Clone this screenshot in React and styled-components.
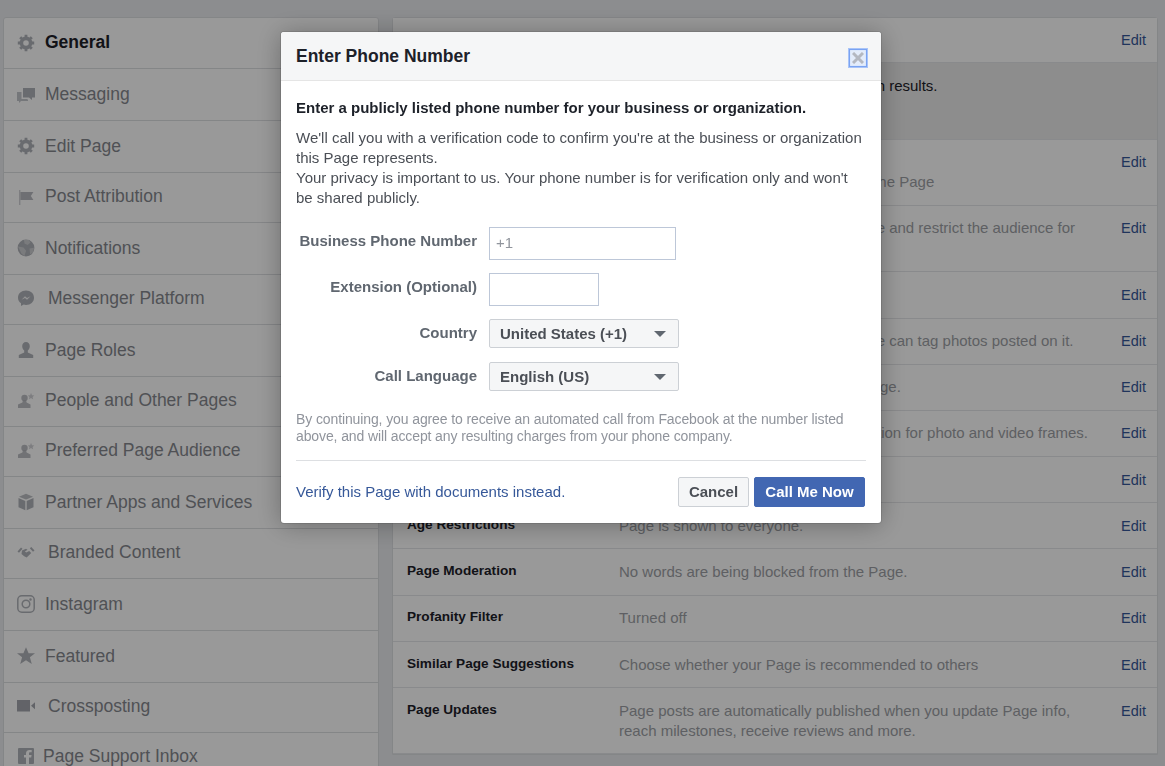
import React from 'react';
import styled, { createGlobalStyle } from 'styled-components';

const GlobalStyle = createGlobalStyle`
  html, body {
    margin: 0;
    padding: 0;
    height: 100%;
    overflow: hidden;
    background: #e9ebee;
    font-family: "Liberation Sans", Arial, sans-serif;
  }
`;

const Page = styled.div`
  display: flex;
  align-items: flex-start;
  gap: 14px;
  height: 766px;
  padding: 17px 6px 0 3px;
  box-sizing: border-box;
  overflow: hidden;
`;

const Sidebar = styled.nav`
  flex: 0 0 376px;
  background: #fff;
  border: 1px solid #dddfe2;
  border-radius: 3px 3px 0 0;
  box-sizing: border-box;
`;

const NavItem = styled.div`
  display: flex;
  align-items: center;
  height: ${p => p.$h}px;
  box-sizing: border-box;
  padding-left: 13px;
  padding-bottom: ${p => (p.$h === 50 ? 3 : 1)}px;
  border-bottom: 1px solid #dddfe2;
  font-size: 17.5px;
  color: ${p => (p.$active ? '#1d2129' : '#85888e')};
  font-weight: ${p => (p.$active ? 700 : 400)};
  white-space: nowrap;
`;

const NavIcon = styled.svg`
  flex: none;
  width: 18px;
  height: 18px;
  margin-right: ${p => p.$gap}px;
  color: #b0b3b9;
`;

const Main = styled.section`
  flex: 0 0 766px;
  margin-left: -1px;
  background: #fff;
  border: 1px solid #dddfe2;
  border-radius: 3px 3px 0 0;
  box-sizing: border-box;
`;

const Row = styled.div`
  display: flex;
  height: ${p => p.$h}px;
  box-sizing: border-box;
  padding: ${p => p.$pt}px 11px 0 14px;
  background: ${p => (p.$hl ? '#ebebeb' : '#fff')};
  border-bottom: 1px solid #e5e6e9;
`;

const RowLabel = styled.div`
  flex: 0 0 212px;
  margin-top: 1px;
  font-size: 13.6px;
  line-height: 16px;
  font-weight: 700;
  color: #1d2129;
`;

const RowValue = styled.div`
  flex: 0 0 480px;
  font-size: 15px;
  line-height: 20px;
  color: ${p => (p.$hl ? '#1d2129' : '#9d9fa5')};
  white-space: nowrap;
`;

const EditLink = styled.a`
  margin-left: auto;
  font-size: 14.5px;
  line-height: 20px;
  color: #365899;
`;

const Overlay = styled.div`
  position: fixed;
  inset: 0;
  background: rgba(0, 0, 0, 0.4);
`;

const Modal = styled.div`
  width: 600px;
  margin: 32px 0 0 281px;
  background: #fff;
  border-radius: 3px;
  box-shadow: 0 2px 26px rgba(0, 0, 0, 0.3), 0 0 0 1px rgba(0, 0, 0, 0.1);
`;

const ModalHeader = styled.header`
  display: flex;
  align-items: center;
  justify-content: space-between;
  height: 49px;
  box-sizing: border-box;
  padding: 0 14px 0 15px;
  background: #f5f6f7;
  border-bottom: 1px solid #e5e5e5;
  border-radius: 3px 3px 0 0;
`;

const ModalTitle = styled.h2`
  margin: 0;
  font-size: 17.5px;
  font-weight: 700;
  color: #1d2129;
`;

const CloseButton = styled.button`
  display: flex;
  align-items: center;
  justify-content: center;
  width: 18px;
  height: 18px;
  margin-top: 4px;
  padding: 0;
  background: #e3ecfb;
  border: 1px solid #7aa3f2;
  box-shadow: 0 0 0 1px #a9c4f8, inset 0 0 1px #9bbcf7;
  box-sizing: border-box;
  svg {
    display: block;
  }
`;

const ModalBody = styled.div`
  padding: 18px 15px 16px;
`;

const Lead = styled.p`
  margin: 0 0 11px;
  font-size: 15px;
  line-height: 18px;
  font-weight: 700;
  color: #1d2129;
`;

const Para = styled.p`
  margin: 0 0 19px;
  font-size: 15px;
  line-height: 20px;
  color: #4b4f56;
`;

const Form = styled.div`
  display: flex;
  flex-direction: column;
`;

const FormRow = styled.div`
  display: flex;
  align-items: center;
  gap: 12px;
  margin-bottom: ${p => p.$mb}px;
`;

const FormLabel = styled.label`
  flex: 0 0 181px;
  padding-bottom: ${p => p.$lift}px;
  text-align: right;
  font-size: 15px;
  font-weight: 700;
  color: #606770;
`;

const Input = styled.input`
  width: ${p => p.$w}px;
  height: 33px;
  padding: 0 6px 2px;
  box-sizing: border-box;
  border: 1px solid #bdc7d8;
  background: #fff;
  font: 15px "Liberation Sans", Arial, sans-serif;
  outline: none;
  &::placeholder {
    color: #90949c;
  }
`;

const Select = styled.div`
  display: flex;
  align-items: center;
  justify-content: space-between;
  width: 190px;
  height: 29px;
  padding: 0 12px 0 10px;
  box-sizing: border-box;
  border: 1px solid #ccd0d5;
  border-radius: 2px;
  background: #f5f6f7;
  font-size: 15px;
  font-weight: 700;
  color: #4b4f56;
`;

const Caret = styled.span`
  width: 0;
  height: 0;
  border-style: solid;
  border-width: 6px 6px 0;
  border-color: #606770 transparent transparent;
`;

const Notice = styled.p`
  margin: 20px 0 15px;
  font-size: 14px;
  letter-spacing: -0.11px;
  line-height: 17px;
  color: #90949c;
`;

const Footer = styled.footer`
  display: flex;
  align-items: center;
  gap: 5px;
  padding: 16px 1px 0 0;
  border-top: 1px solid #dddfe2;
`;

const FooterLink = styled.a`
  margin-right: auto;
  padding-bottom: 2px;
  font-size: 15px;
  color: #365899;
`;

const Button = styled.button`
  width: ${p => p.$w}px;
  height: 30px;
  padding: 0 0 2px;
  box-sizing: border-box;
  border: 1px solid ${p => (p.$primary ? '#4267b2' : '#ccd0d5')};
  border-radius: 2px;
  background: ${p => (p.$primary ? '#4267b2' : '#f5f6f7')};
  color: ${p => (p.$primary ? '#fff' : '#4b4f56')};
  font: 700 15px "Liberation Sans", Arial, sans-serif;
`;

const Gear = (
  <g fill="none" stroke="currentColor">
    <circle cx="9" cy="9" r="4.6" strokeWidth="3.600" />
    <path strokeWidth="2.800" d="M9 .8v3M9 14.200v3M.8 9h3M14.200 9h3M3.200 3.200l2.100 2.100M12.700 12.700l2.100 2.100M14.800 3.200l-2.100 2.100M5.300 12.700l-2.100 2.100" />
  </g>
);

const PersonStar = (
  <g fill="currentColor">
    <circle cx="7.500" cy="7" r="3.200" opacity=".85" />
    <path opacity=".85" d="M6 9h3l.6 2.600 3.900 2V17H1v-3.400l4.400-2z" />
    <path opacity=".6" d="M14 2l1 2.200 2.300.2-1.700 1.600.5 2.300-2.100-1.200-2 1.200.5-2.300-1.700-1.600 2.300-.2z" />
  </g>
);

const icons = {
  gear: Gear,
  chat: (
    <g fill="currentColor">
      <path d="M6 3h12v9.500h-3V15l-3-2.500H6z" />
      <path opacity=".75" d="M0 7h4.500v7H10l1 .8V16H4l-2 2v-2H0z" />
    </g>
  ),
  flag: (
    <g fill="currentColor">
      <path opacity=".6" d="M2 3h1.400v15H2z" />
      <path d="M3.400 5h13l-2.600 4 2.600 4h-13z" opacity=".9" />
    </g>
  ),
  globe: (
    <g>
      <circle cx="9" cy="9" r="8.400" fill="currentColor" />
      <path d="M7 .9L11.500 .8l2 2.800-2.900 2.400-3.100-1.600zM1 7.500l5.500 1 2.600 3.200-1.700 5.300-3-2.500zM12.500 9.500l4.500-.7-.9 4.500-3 2.200z" fill="#ffffff" opacity=".35" />
    </g>
  ),
  messenger: (
    <g>
      <path fill="currentColor" d="M9 1.500c4.600 0 8 3 8 7.200s-3.400 7.200-8 7.200c-.8 0-1.600-.1-2.300-.3L4 17v-2.700C2.200 13 1 11 1 8.700 1 4.500 4.400 1.500 9 1.500z" />
      <path d="M4.500 10.800L8 7.200l2 1.800 3.500-1.800-3.500 3.600-2-1.800z" fill="#ffffff" opacity=".9" />
    </g>
  ),
  person: (
    <path fill="currentColor" d="M9 1c2.300 0 3.800 1.800 3.800 4.200 0 1.900-.9 3.500-2 4.300v1.900l5.400 2.700V17H1.800v-2.900l5.400-2.700V9.500c-1.100-.8-2-2.400-2-4.300C5.200 2.800 6.700 1 9 1z" />
  ),
  personStar: PersonStar,
  cube: (
    <g fill="currentColor">
      <path d="M9 .8l7 2.900L9 6.600 2 3.700z" opacity=".85" />
      <path d="M1.500 5l6.800 2.900v9.300L1.500 14.200z" />
      <path d="M16.500 5L9.700 7.900v9.300l6.800-3z" />
    </g>
  ),
  shake: (
    <g fill="currentColor">
      <path d="M.5 8.500L4 4.500l1.500 1.300L2 9.800zM17.500 7.500L14.300 4l-1.500 1.300L16 8.800z" />
      <path d="M5 7.500L9 5.800l1.500 1-2.600 1.600 1.300 1 3-1.500 2 2-4.500 4.500-2.500-1.200L4.500 11z" />
    </g>
  ),
  instagram: (
    <g fill="none" stroke="currentColor" strokeWidth="1.500">
      <rect x=".8" y=".8" width="16.400" height="16.400" rx="4" />
      <circle cx="9" cy="9" r="3.800" />
      <circle cx="13.500" cy="4.500" r=".5" fill="currentColor" />
    </g>
  ),
  star: <path fill="currentColor" d="M9 .3l2.600 6h6.400l-5.100 4 1.900 6.700L9 13.200 3.200 17l1.900-6.700-5.100-4h6.400z" />,
  video: (
    <g fill="#a3a6ad">
      <rect x="0" y="3" width="13" height="11.500" />
      <path d="M14 8.700L19 4.500v8.500z" />
    </g>
  ),
  fb: (
    <path fill="currentColor" d="M2 1h14a1 1 0 0 1 1 1v14a1 1 0 0 1-1 1h-4v-6.500h2.200l.4-2.500H12V6.500c0-.8.3-1.200 1.200-1.200h1.500V3h-2.100C10.200 3 9 4.400 9 6.400V8H7v2.500h2V17H2a1 1 0 0 1-1-1V2a1 1 0 0 1 1-1z" />
  ),
};

const navItems = [
  { label: 'General', icon: 'gear', h: 51, gap: 10, active: true },
  { label: 'Messaging', icon: 'chat', h: 52, gap: 10 },
  { label: 'Edit Page', icon: 'gear', h: 52, gap: 10 },
  { label: 'Post Attribution', icon: 'flag', h: 50, gap: 10 },
  { label: 'Notifications', icon: 'globe', h: 52, gap: 10 },
  { label: 'Messenger Platform', icon: 'messenger', h: 50, gap: 13 },
  { label: 'Page Roles', icon: 'person', h: 52, gap: 10 },
  { label: 'People and Other Pages', icon: 'personStar', h: 50, gap: 10 },
  { label: 'Preferred Page Audience', icon: 'personStar', h: 50, gap: 10 },
  { label: 'Partner Apps and Services', icon: 'cube', h: 52, gap: 10 },
  { label: 'Branded Content', icon: 'shake', h: 50, gap: 13 },
  { label: 'Instagram', icon: 'instagram', h: 52, gap: 10 },
  { label: 'Featured', icon: 'star', h: 52, gap: 10 },
  { label: 'Crossposting', icon: 'video', h: 50, gap: 13 },
  { label: 'Page Support Inbox', icon: 'fb', h: 50, gap: 8 },
];

const rows = [
  { h: 45, pt: 12, label: 'Page Visibility', value: 'Page published' },
  { h: 77, pt: 13, hl: true, label: 'Page Verification', value: 'Verified Pages will rank higher in search results.' },
  { h: 66, pt: 12, label: 'Visitor Posts', value: <>Anyone can publish to the Page<br />Anyone can add photos and videos to the Page</> },
  { h: 66, pt: 12, label: 'News Feed Audience', value: <>The ability to narrow your post audience and restrict the audience for<br />your posts is turned off</> },
  { h: 47, pt: 13, label: 'Messages', value: 'People can contact my Page privately.' },
  { h: 46, pt: 12, label: 'Tagging Ability', value: 'Only people who help manage my Page can tag photos posted on it.' },
  { h: 46, pt: 12, label: 'Others Tagging this Page', value: 'People and other Pages can tag my Page.' },
  { h: 46, pt: 12, label: 'Page Location for Frames', value: "Other people can use your Page's location for photo and video frames." },
  { h: 46, pt: 13, label: 'Country Restrictions', value: 'Page is visible to everyone.' },
  { h: 46, pt: 13, label: 'Age Restrictions', value: 'Page is shown to everyone.' },
  { h: 47, pt: 13, label: 'Page Moderation', value: 'No words are being blocked from the Page.' },
  { h: 46, pt: 12, label: 'Profanity Filter', value: 'Turned off' },
  { h: 46, pt: 13, label: 'Similar Page Suggestions', value: 'Choose whether your Page is recommended to others' },
  { h: 66, pt: 13, label: 'Page Updates', value: <>Page posts are automatically published when you update Page info,<br />reach milestones, receive reviews and more.</> },
];

const App = () => (
  <>
    <GlobalStyle />
    <Page>
      <Sidebar>
        {navItems.map(item => (
          <NavItem key={item.label} $h={item.h} $active={item.active}>
            <NavIcon viewBox="0 0 18 18" $gap={item.gap}>{icons[item.icon]}</NavIcon>
            {item.label}
          </NavItem>
        ))}
      </Sidebar>
      <Main>
        {rows.map(row => (
          <Row key={row.label} $h={row.h} $pt={row.pt} $hl={row.hl}>
            <RowLabel>{row.label}</RowLabel>
            <RowValue $hl={row.hl}>{row.value}</RowValue>
            {!row.hl && <EditLink>Edit</EditLink>}
          </Row>
        ))}
      </Main>
    </Page>
    <Overlay>
      <Modal>
        <ModalHeader>
          <ModalTitle>Enter Phone Number</ModalTitle>
          <CloseButton aria-label="Close">
            <svg width="12" height="12" viewBox="0 0 12 12">
              <path d="M1 1l10 10M11 1L1 11" stroke="#b4b8c1" strokeWidth="3" />
            </svg>
          </CloseButton>
        </ModalHeader>
        <ModalBody>
          <Lead>Enter a publicly listed phone number for your business or organization.</Lead>
          <Para>
            We'll call you with a verification code to confirm you're at the business or organization<br />
            this Page represents.<br />
            Your privacy is important to us. Your phone number is for verification only and won't<br />
            be shared publicly.
          </Para>
          <Form>
            <FormRow $mb={13}>
              <FormLabel $lift={6}>Business Phone Number</FormLabel>
              <Input $w={187} placeholder="+1" />
            </FormRow>
            <FormRow $mb={13}>
              <FormLabel $lift={6}>Extension (Optional)</FormLabel>
              <Input $w={110} />
            </FormRow>
            <FormRow $mb={14}>
              <FormLabel $lift={2}>Country</FormLabel>
              <Select>United States (+1)<Caret /></Select>
            </FormRow>
            <FormRow $mb={0}>
              <FormLabel $lift={2}>Call Language</FormLabel>
              <Select>English (US)<Caret /></Select>
            </FormRow>
          </Form>
          <Notice>
            By continuing, you agree to receive an automated call from Facebook at the number listed<br />
            above, and will accept any resulting charges from your phone company.
          </Notice>
          <Footer>
            <FooterLink>Verify this Page with documents instead.</FooterLink>
            <Button $w={71}>Cancel</Button>
            <Button $w={111} $primary>Call Me Now</Button>
          </Footer>
        </ModalBody>
      </Modal>
    </Overlay>
  </>
);

export default App;
